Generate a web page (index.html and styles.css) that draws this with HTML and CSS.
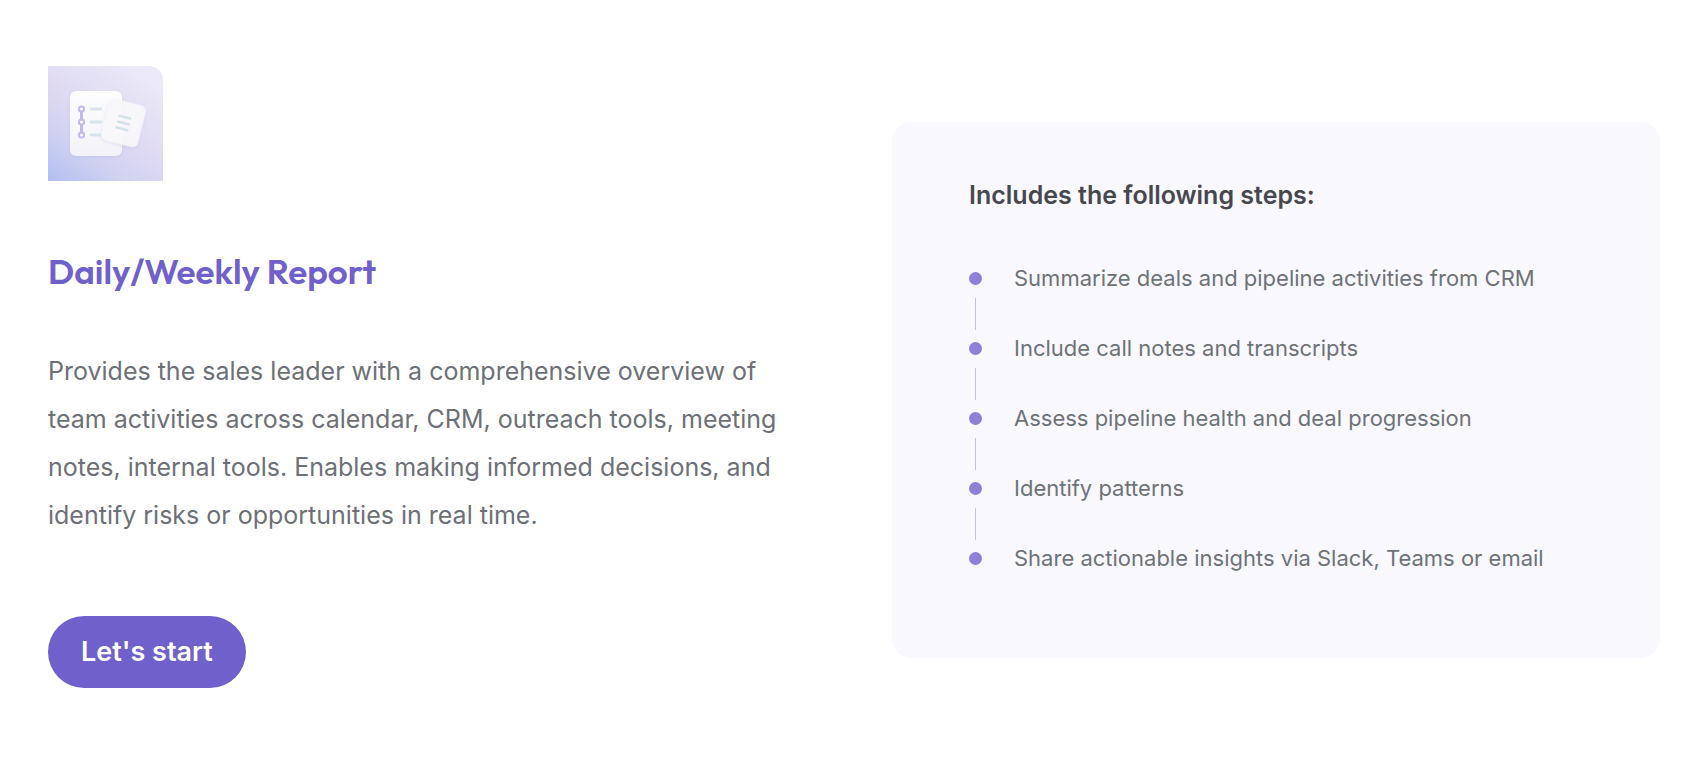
FILE: index.html
```html
<!DOCTYPE html>
<html lang="en">
<head>
<meta charset="utf-8">
<meta name="viewport" content="width=device-width, initial-scale=1">
<title>Daily/Weekly Report</title>
<link rel="stylesheet" href="styles.css">
</head>
<body>
<main class="template">
  <section class="intro">
    <svg class="intro-icon" viewBox="0 0 115 115" aria-hidden="true">
      <defs>
        <linearGradient id="tile" x1="0" y1="1" x2="0.7" y2="0">
          <stop offset="0" stop-color="#b0bff0"/>
          <stop offset="0.3" stop-color="#cfd1f2"/>
          <stop offset="0.55" stop-color="#ded9f2"/>
          <stop offset="1" stop-color="#ebe8f8"/>
        </linearGradient>
        <linearGradient id="sheet" x1="0" y1="0" x2="0" y2="1">
          <stop offset="0" stop-color="#fdfdfe"/>
          <stop offset="1" stop-color="#f3f2f8"/>
        </linearGradient>
        <filter id="shade" x="-20%" y="-20%" width="140%" height="140%">
          <feDropShadow dx="0" dy="1" stdDeviation="1.5" flood-color="#a99fd8" flood-opacity="0.3"/>
        </filter>
      </defs>
      <path d="M0 0H101A14 14 0 0 1 115 14V115H0Z" fill="url(#tile)"/>
      <rect x="22" y="25" width="52" height="65" rx="6" fill="url(#sheet)" filter="url(#shade)"/>
      <g fill="none" stroke="#c3b9ec" stroke-width="2">
        <path d="M33.500 46v7M33.500 59v7" stroke-width="3"/>
        <circle cx="33.500" cy="43" r="2.600"/>
        <circle cx="33.500" cy="56" r="2.600"/>
        <circle cx="33.500" cy="69" r="2.600"/>
      </g>
      <path d="M43 43H53M43 56H53M43 69H52" stroke="#d9e4ea" stroke-width="3" stroke-linecap="round"/>
      <g transform="rotate(14 75.500 57)">
        <rect x="56.500" y="35.500" width="38" height="43" rx="6" fill="#faf9fa" fill-opacity="0.92" filter="url(#shade)"/>
        <path d="M70 51H81M70 57H81M70 63H81" stroke="#d3e2e8" stroke-width="2.500" stroke-linecap="round"/>
      </g>
    </svg>
    <h1 class="intro-title">Daily/Weekly Report</h1>
    <p class="intro-text">Provides the sales leader with a comprehensive overview of team activities across calendar, CRM, outreach tools, meeting notes, internal tools. Enables making informed decisions, and identify risks or opportunities in real time.</p>
    <button class="start-button" type="button">Let's start</button>
  </section>
  <section class="steps">
    <h2 class="steps-title">Includes the following steps:</h2>
    <ol class="steps-list">
      <li class="step">Summarize deals and pipeline activities from CRM</li>
      <li class="step">Include call notes and transcripts</li>
      <li class="step">Assess pipeline health and deal progression</li>
      <li class="step">Identify patterns</li>
      <li class="step">Share actionable insights via Slack, Teams or email</li>
    </ol>
  </section>
</main>
</body>
</html>
```
FILE: styles.css
```css
* {
  box-sizing: border-box;
}

body {
  margin: 0;
  background: #fff;
  color: #6d7077;
  font-family: Inter, sans-serif;
}

.template {
  display: grid;
  grid-template-columns: 1fr 1fr;
  align-items: center;
  column-gap: 76px;
  padding: 66px 46px 48px 48px;
}

.intro {
  display: flex;
  flex-direction: column;
  align-items: flex-start;
  padding-bottom: 26px;
}

.intro-icon {
  width: 115px;
  height: 115px;
}

.intro-title {
  margin: 66px 0 0;
  color: #7060cb;
  font-family: Outfit, Lato, sans-serif;
  font-size: 35px;
  font-weight: 600;
  line-height: 48px;
}

.intro-text {
  margin: 52px 0 0;
  font-size: 25px;
  line-height: 48px;
}

.start-button {
  margin-top: 77px;
  padding: 19px 33px;
  border: 0;
  border-radius: 36px;
  background: #7060cb;
  color: #fff;
  font-family: inherit;
  font-size: 27px;
  font-weight: 600;
  line-height: 34px;
}

.steps {
  padding: 53px 77px 84px;
  border-radius: 19px;
  background: #f9f8fe;
}

.steps-title {
  margin: 0;
  color: #47484e;
  font-size: 25px;
  font-weight: 600;
  line-height: 40px;
}

.steps-list {
  display: flex;
  flex-direction: column;
  gap: 38px;
  margin: 47px 0 0;
  padding: 0;
  list-style: none;
}

.step {
  position: relative;
  padding-left: 45px;
  color: #6e7378;
  font-size: 22px;
  line-height: 32px;
}

.step::before {
  content: "";
  position: absolute;
  top: 10px;
  left: 0;
  width: 13px;
  height: 13px;
  border-radius: 50%;
  background: #8e80d8;
}

.step:not(:last-child)::after {
  content: "";
  position: absolute;
  top: 36px;
  left: 6px;
  width: 1px;
  height: 32px;
  background: #c5bdea;
}
```
